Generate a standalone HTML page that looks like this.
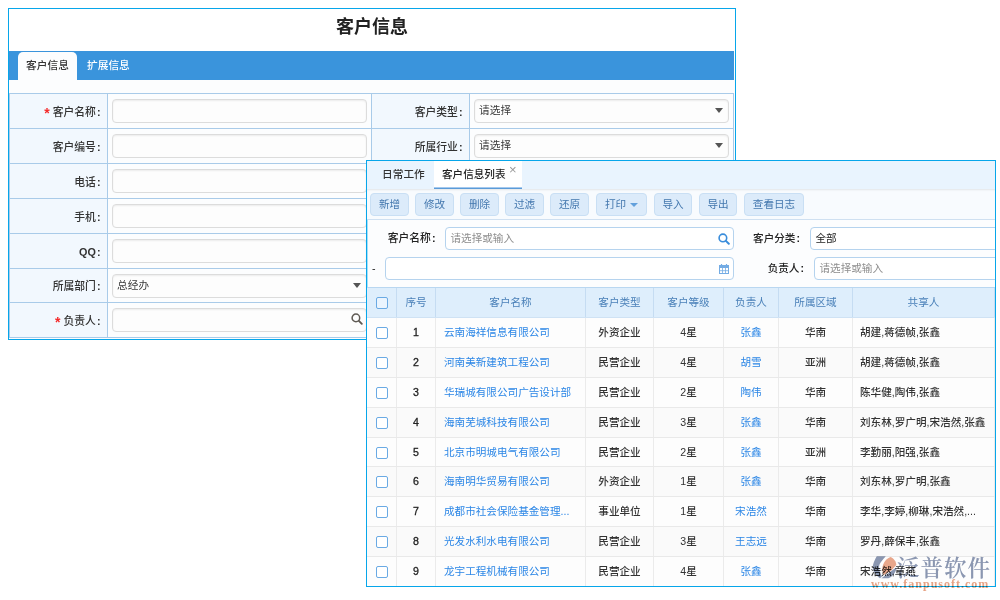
<!DOCTYPE html>
<html lang="zh-CN">
<head>
<meta charset="utf-8">
<title>客户信息</title>
<style>
*{box-sizing:border-box;margin:0;padding:0}
html,body{width:1000px;height:600px;background:#fff;overflow:hidden}
body{position:relative;font-family:"Liberation Sans","Noto Sans CJK SC",sans-serif;font-size:10.7px;color:#333;font-weight:500}
.abs{position:absolute}

/* ---------- left panel ---------- */
#lp{position:absolute;left:8px;top:8px;width:728px;height:332px;border:1px solid #07a6ea;background:#fcfdfe;overflow:hidden}
#lp .title{position:absolute;left:0;top:0;width:726px;height:42px;background:#fff;text-align:center;font-weight:bold;font-size:18px;line-height:36px;color:#222}
#lp .bar{position:absolute;left:0;top:42px;width:725px;height:29px;background:#3a94dc}
#lp .tab1{position:absolute;left:9px;top:1px;width:59px;height:28px;background:#fcfdfe;border-radius:5px 5px 0 0;text-align:center;line-height:27px;color:#333}
#lp .tab2{position:absolute;left:78px;top:1px;height:28px;line-height:27px;color:#fff}
#ft{position:absolute;left:0;top:84px;width:725px;height:245px;border-top:1px solid #a9cbe9;border-left:1px solid #a9cbe9}
.fr{position:absolute;left:0;height:35px;width:724px}
.fc{position:absolute;top:0;height:35px;border-right:1px solid #a9cbe9;border-bottom:1px solid #a9cbe9}
.r34,.r34 .fc{height:34px}
.r34 .fl{line-height:35px}
.fl{background:#f2f8fe;text-align:right;line-height:36px;padding-right:6.5px;color:#333;font-size:10.8px}
.co{margin-left:1px;font-weight:bold}
.fi{background:#fcfdfe}
.req{color:#f42a2a;margin-right:3px;font-weight:bold;font-size:14px;line-height:10px;position:relative;top:2px}
.inp{position:absolute;top:5px;height:24px;border:1px solid #dcdcdc;border-radius:4px;background:#fdfdfd;box-shadow:inset 0 1px 2px rgba(0,0,0,.07);line-height:20px;padding-left:4px;color:#3a3a3a;font-weight:400}
.arr{position:absolute;right:5px;top:8px;width:0;height:0;border-left:4px solid transparent;border-right:4px solid transparent;border-top:5px solid #555}

/* ---------- right panel ---------- */
#rp{position:absolute;left:366px;top:160px;width:630px;height:427px;border:1px solid #07a6ea;background:#fcfdfe;overflow:hidden;box-shadow:inset 1px 0 0 rgba(7,166,234,.35);font-size:10.6px}
#rp .tabs{position:absolute;left:0;top:0;width:628px;height:28px;background:#e9f4fe}
#rp .t1{position:absolute;left:15px;top:0;line-height:27px;color:#333;font-size:10.7px}
#rp .t2{position:absolute;left:67px;top:0;width:88px;height:28px;background:#fff;border-bottom:1px solid #5b9bd8;box-shadow:inset 0 -1px 0 #a5c9ee;line-height:27px;padding-left:8px;color:#222}
#rp .x{position:absolute;left:75px;top:-5px;font-size:13px;color:#999}
#rp .tool{position:absolute;left:0;top:28px;width:628px;height:31px;background:#f8fbfe;border-bottom:1px solid #cfe0f1;box-shadow:inset 0 2px 2px -1px rgba(0,0,0,.09)}
.btn{position:absolute;top:4px;height:23px;border:1px solid #c9dff4;border-radius:4px;background:#dcebfa;color:#4377ae;text-align:center;line-height:21px;font-weight:400}
.tri{display:inline-block;width:0;height:0;border-left:4px solid transparent;border-right:4px solid transparent;border-top:4.5px solid #62a0dc;margin-left:4px;vertical-align:1px}
.sl{position:absolute;text-align:right;color:#222;line-height:22px}
.si{position:absolute;height:23px;border:1px solid #b5d3ee;border-radius:4px;background:#fff;line-height:21px;padding-left:4.5px;color:#8e8e8e;font-weight:400}
#gt{position:absolute;left:0;top:126px;width:628px}
.gh{position:absolute;left:0;top:0;height:31px;width:628px;background:#deeefc;border-top:1px solid #b9d7f1;border-bottom:1px solid #cfe2f4}
.gh div{position:absolute;top:0;height:29px;line-height:29px;text-align:center;color:#4a80b8;font-weight:400;border-right:1px solid #c5dcf2}
.gr{position:absolute;left:0;height:30px;width:628px;border-bottom:1px solid #e9e9e9;background:#fdfdfd}
.gr.alt{background:#fafafa}
.gr div{position:absolute;top:0;height:100%;line-height:28.5px;text-align:center;border-right:1px solid #ebebeb;white-space:nowrap;overflow:hidden}
.lk{color:#2b86e6;font-weight:400}
.no{color:#222;-webkit-text-stroke:.3px #222}
.cb{position:absolute;left:9px;width:12px;height:12px;border:1px solid #6aaae4;border-radius:2px;background:#fff}

/* ---------- watermark ---------- */
#wm{position:absolute;left:873px;top:556px;width:125px;height:40px;mix-blend-mode:multiply}
#wm .wt{position:absolute;left:24px;top:-4.5px;font-family:"Liberation Serif","Noto Serif CJK SC",serif;font-weight:600;font-size:22.5px;letter-spacing:1px;line-height:34px;color:#8c98b3;white-space:nowrap}
#wm .wu{position:absolute;left:-2px;top:20px;font-family:"Liberation Serif",serif;font-weight:bold;font-size:12px;letter-spacing:1px;line-height:16px;color:#e8a486;white-space:nowrap}
</style>
</head>
<body>

<!-- ================= LEFT PANEL ================= -->
<div id="lp">
  <div class="title">客户信息</div>
  <div class="bar">
    <div class="tab1">客户信息</div>
    <div class="tab2">扩展信息</div>
  </div>
  <div id="ft">
    <div class="fr" style="top:0">
      <div class="fc fl" style="left:0;width:98px"><span class="req">*</span>客户名称<span class="co">:</span></div>
      <div class="fc fi" style="left:98px;width:264px"><div class="inp" style="left:4px;width:255px"></div></div>
      <div class="fc fl" style="left:362px;width:98px">客户类型<span class="co">:</span></div>
      <div class="fc fi" style="left:460px;width:264px"><div class="inp" style="left:4px;width:255px">请选择<i class="arr"></i></div></div>
    </div>
    <div class="fr" style="top:35px">
      <div class="fc fl" style="left:0;width:98px">客户编号<span class="co">:</span></div>
      <div class="fc fi" style="left:98px;width:264px"><div class="inp" style="left:4px;width:255px"></div></div>
      <div class="fc fl" style="left:362px;width:98px">所属行业<span class="co">:</span></div>
      <div class="fc fi" style="left:460px;width:264px"><div class="inp" style="left:4px;width:255px">请选择<i class="arr"></i></div></div>
    </div>
    <div class="fr" style="top:70px">
      <div class="fc fl" style="left:0;width:98px">电话<span class="co">:</span></div>
      <div class="fc fi" style="left:98px;width:264px"><div class="inp" style="left:4px;width:255px"></div></div>
      <div class="fc fl" style="left:362px;width:98px"></div>
      <div class="fc fi" style="left:460px;width:264px"><div class="inp" style="left:4px;width:255px"></div></div>
    </div>
    <div class="fr" style="top:105px">
      <div class="fc fl" style="left:0;width:98px">手机<span class="co">:</span></div>
      <div class="fc fi" style="left:98px;width:264px"><div class="inp" style="left:4px;width:255px"></div></div>
      <div class="fc fl" style="left:362px;width:98px"></div>
      <div class="fc fi" style="left:460px;width:264px"><div class="inp" style="left:4px;width:255px"></div></div>
    </div>
    <div class="fr" style="top:140px">
      <div class="fc fl" style="left:0;width:98px"><b>QQ</b><span class="co">:</span></div>
      <div class="fc fi" style="left:98px;width:264px"><div class="inp" style="left:4px;width:255px"></div></div>
      <div class="fc fl" style="left:362px;width:98px"></div>
      <div class="fc fi" style="left:460px;width:264px"><div class="inp" style="left:4px;width:255px"></div></div>
    </div>
    <div class="fr r34" style="top:175px">
      <div class="fc fl" style="left:0;width:98px">所属部门<span class="co">:</span></div>
      <div class="fc fi" style="left:98px;width:264px"><div class="inp" style="left:4px;width:255px">总经办<i class="arr"></i></div></div>
      <div class="fc fl" style="left:362px;width:98px"></div>
      <div class="fc fi" style="left:460px;width:264px"><div class="inp" style="left:4px;width:255px"></div></div>
    </div>
    <div class="fr" style="top:209px">
      <div class="fc fl" style="left:0;width:98px"><span class="req">*</span>负责人<span class="co">:</span></div>
      <div class="fc fi" style="left:98px;width:264px"><div class="inp" style="left:4px;width:255px">
        <svg class="abs" style="right:3px;top:4px" width="12" height="12" viewBox="0 0 12 12"><circle cx="4.9" cy="4.9" r="3.8" fill="none" stroke="#5f5a54" stroke-width="1.5"/><path d="M7.9 7.9L10.8 10.8" stroke="#5f5a54" stroke-width="1.9" stroke-linecap="round"/></svg>
      </div></div>
      <div class="fc fl" style="left:362px;width:98px"></div>
      <div class="fc fi" style="left:460px;width:264px"><div class="inp" style="left:4px;width:255px"></div></div>
    </div>
  </div>
</div>

<!-- ================= RIGHT PANEL ================= -->
<div id="rp">
  <div class="tabs">
    <div class="t1">日常工作</div>
    <div class="t2">客户信息列表<span class="x">×</span></div>
  </div>
  <div class="tool">
    <div class="btn" style="left:3px;width:39px">新增</div>
    <div class="btn" style="left:48px;width:39px">修改</div>
    <div class="btn" style="left:93px;width:39px">删除</div>
    <div class="btn" style="left:138px;width:39px">过滤</div>
    <div class="btn" style="left:183px;width:39px">还原</div>
    <div class="btn" style="left:229px;width:51px">打印<i class="tri"></i></div>
    <div class="btn" style="left:287px;width:38px">导入</div>
    <div class="btn" style="left:332px;width:38px">导出</div>
    <div class="btn" style="left:377px;width:60px">查看日志</div>
  </div>

  <div class="sl" style="left:0;top:66px;width:68.5px;font-size:10.8px">客户名称<span class="co">:</span></div>
  <div class="si" style="left:78px;top:66px;width:289px">请选择或输入
    <svg class="abs" style="right:3px;top:4.5px" width="12" height="12" viewBox="0 0 12 12"><circle cx="4.9" cy="4.9" r="3.8" fill="none" stroke="#3a8ddb" stroke-width="1.6"/><path d="M7.9 7.9L10.8 10.8" stroke="#3a8ddb" stroke-width="2" stroke-linecap="round"/></svg>
  </div>
  <div class="sl" style="left:366px;top:66px;width:67px">客户分类<span class="co">:</span></div>
  <div class="si" style="left:443px;top:66px;width:200px;color:#222">全部</div>

  <div class="sl" style="left:5px;top:96px;width:8px;text-align:left">-</div>
  <div class="si" style="left:18px;top:96px;width:349px">
    <svg class="abs" style="right:4px;top:6px" width="10" height="10" viewBox="0 0 10 10"><rect x="0.5" y="1.5" width="9" height="8" fill="#fff" stroke="#74ace4" stroke-width="1"/><rect x="0.5" y="1.5" width="9" height="2.5" fill="#74ace4"/><path d="M3.5 4V9.5M6.5 4V9.5M0.5 6.7H9.5" stroke="#74ace4" stroke-width="0.8"/><path d="M2.5 0V2.5M7.5 0V2.5" stroke="#74ace4" stroke-width="1.2"/></svg>
  </div>
  <div class="sl" style="left:366px;top:96px;width:71px">负责人<span class="co">:</span></div>
  <div class="si" style="left:447px;top:96px;width:200px">请选择或输入</div>

  <div id="gt">
    <div class="gh">
      <div style="left:0;width:30px"><span class="cb" style="top:9px;background:#eaf4fe"></span></div>
      <div style="left:30px;width:39px">序号</div>
      <div style="left:69px;width:150px">客户名称</div>
      <div style="left:219px;width:68px">客户类型</div>
      <div style="left:287px;width:70px">客户等级</div>
      <div style="left:357px;width:55px">负责人</div>
      <div style="left:412px;width:74px">所属区域</div>
      <div style="left:486px;width:142px">共享人</div>
    </div>
<!--ROWS-->
    <div class="gr" style="top:31px;height:30px">
      <div style="left:0;width:30px"><span class="cb" style="top:9px"></span></div>
      <div class="no" style="left:30px;width:39px">1</div>
      <div class="lk" style="left:69px;width:150px;text-align:left;padding-left:8px">云南海祥信息有限公司</div>
      <div style="left:219px;width:68px">外资企业</div>
      <div style="left:287px;width:70px">4星</div>
      <div class="lk" style="left:357px;width:55px">张鑫</div>
      <div style="left:412px;width:74px">华南</div>
      <div style="left:486px;width:142px;text-align:left;padding-left:7px">胡建,蒋德帧,张鑫</div>
    </div>
    <div class="gr alt" style="top:61px;height:30px">
      <div style="left:0;width:30px"><span class="cb" style="top:9px"></span></div>
      <div class="no" style="left:30px;width:39px">2</div>
      <div class="lk" style="left:69px;width:150px;text-align:left;padding-left:8px">河南美新建筑工程公司</div>
      <div style="left:219px;width:68px">民营企业</div>
      <div style="left:287px;width:70px">4星</div>
      <div class="lk" style="left:357px;width:55px">胡雪</div>
      <div style="left:412px;width:74px">亚洲</div>
      <div style="left:486px;width:142px;text-align:left;padding-left:7px">胡建,蒋德帧,张鑫</div>
    </div>
    <div class="gr" style="top:91px;height:30px">
      <div style="left:0;width:30px"><span class="cb" style="top:9px"></span></div>
      <div class="no" style="left:30px;width:39px">3</div>
      <div class="lk" style="left:69px;width:150px;text-align:left;padding-left:8px">华瑞城有限公司广告设计部</div>
      <div style="left:219px;width:68px">民营企业</div>
      <div style="left:287px;width:70px">2星</div>
      <div class="lk" style="left:357px;width:55px">陶伟</div>
      <div style="left:412px;width:74px">华南</div>
      <div style="left:486px;width:142px;text-align:left;padding-left:7px">陈华健,陶伟,张鑫</div>
    </div>
    <div class="gr alt" style="top:121px;height:30px">
      <div style="left:0;width:30px"><span class="cb" style="top:9px"></span></div>
      <div class="no" style="left:30px;width:39px">4</div>
      <div class="lk" style="left:69px;width:150px;text-align:left;padding-left:8px">海南芜城科技有限公司</div>
      <div style="left:219px;width:68px">民营企业</div>
      <div style="left:287px;width:70px">3星</div>
      <div class="lk" style="left:357px;width:55px">张鑫</div>
      <div style="left:412px;width:74px">华南</div>
      <div style="left:486px;width:142px;text-align:left;padding-left:7px">刘东林,罗广明,宋浩然,张鑫</div>
    </div>
    <div class="gr" style="top:151px;height:29px">
      <div style="left:0;width:30px"><span class="cb" style="top:9px"></span></div>
      <div class="no" style="left:30px;width:39px">5</div>
      <div class="lk" style="left:69px;width:150px;text-align:left;padding-left:8px">北京市明城电气有限公司</div>
      <div style="left:219px;width:68px">民营企业</div>
      <div style="left:287px;width:70px">2星</div>
      <div class="lk" style="left:357px;width:55px">张鑫</div>
      <div style="left:412px;width:74px">亚洲</div>
      <div style="left:486px;width:142px;text-align:left;padding-left:7px">李勤丽,阳强,张鑫</div>
    </div>
    <div class="gr alt" style="top:180px;height:30px">
      <div style="left:0;width:30px"><span class="cb" style="top:9px"></span></div>
      <div class="no" style="left:30px;width:39px">6</div>
      <div class="lk" style="left:69px;width:150px;text-align:left;padding-left:8px">海南明华贸易有限公司</div>
      <div style="left:219px;width:68px">外资企业</div>
      <div style="left:287px;width:70px">1星</div>
      <div class="lk" style="left:357px;width:55px">张鑫</div>
      <div style="left:412px;width:74px">华南</div>
      <div style="left:486px;width:142px;text-align:left;padding-left:7px">刘东林,罗广明,张鑫</div>
    </div>
    <div class="gr" style="top:210px;height:30px">
      <div style="left:0;width:30px"><span class="cb" style="top:9px"></span></div>
      <div class="no" style="left:30px;width:39px">7</div>
      <div class="lk" style="left:69px;width:150px;text-align:left;padding-left:8px">成都市社会保险基金管理...</div>
      <div style="left:219px;width:68px">事业单位</div>
      <div style="left:287px;width:70px">1星</div>
      <div class="lk" style="left:357px;width:55px">宋浩然</div>
      <div style="left:412px;width:74px">华南</div>
      <div style="left:486px;width:142px;text-align:left;padding-left:7px">李华,李婷,柳琳,宋浩然,...</div>
    </div>
    <div class="gr alt" style="top:240px;height:30px">
      <div style="left:0;width:30px"><span class="cb" style="top:9px"></span></div>
      <div class="no" style="left:30px;width:39px">8</div>
      <div class="lk" style="left:69px;width:150px;text-align:left;padding-left:8px">光发水利水电有限公司</div>
      <div style="left:219px;width:68px">民营企业</div>
      <div style="left:287px;width:70px">3星</div>
      <div class="lk" style="left:357px;width:55px">王志远</div>
      <div style="left:412px;width:74px">华南</div>
      <div style="left:486px;width:142px;text-align:left;padding-left:7px">罗丹,薛保丰,张鑫</div>
    </div>
    <div class="gr" style="top:270px;height:29px;border-bottom:0">
      <div style="left:0;width:30px"><span class="cb" style="top:9px"></span></div>
      <div class="no" style="left:30px;width:39px">9</div>
      <div class="lk" style="left:69px;width:150px;text-align:left;padding-left:8px">龙宇工程机械有限公司</div>
      <div style="left:219px;width:68px">民营企业</div>
      <div style="left:287px;width:70px">4星</div>
      <div class="lk" style="left:357px;width:55px">张鑫</div>
      <div style="left:412px;width:74px">华南</div>
      <div style="left:486px;width:142px;text-align:left;padding-left:7px">宋浩然,章燕</div>
    </div>
<!--/ROWS-->
  </div>
</div>

<!-- ================= WATERMARK ================= -->
<div id="wm">
  <svg class="abs" style="left:-1px;top:0" width="26" height="24" viewBox="-1 0 26 24">
    <path d="M3.75 0.2H12.75C10.5 2.6 7.6 6.2 6.5 8.5C5.8 10.5 5.9 12.5 6.4 14.5C7 17 8 19 9 20.4L7 22.3C4.5 20.5 0.3 16.5 -0.2 12C-0.4 9.5 0.5 6 3.75 0.2Z" fill="#8c98b3"/>
    <path d="M17.4 1C20.8 2.4 23.2 5.4 23.3 9L18.4 14.6L10.6 19C9 15.6 8.8 11.8 10.2 8.4C11.6 5 14.2 2.2 17.4 1Z" fill="#eaa88c"/>
    <path d="M23.1 11.6L23.3 13.4C22 17.4 19 20.8 15.4 22.3H8.4Z" fill="#8c98b3"/>
    </svg>
  <div class="wt">泛普软件</div>
  <div class="wu">www.fanpusoft.com</div>
</div>

</body>
</html>
